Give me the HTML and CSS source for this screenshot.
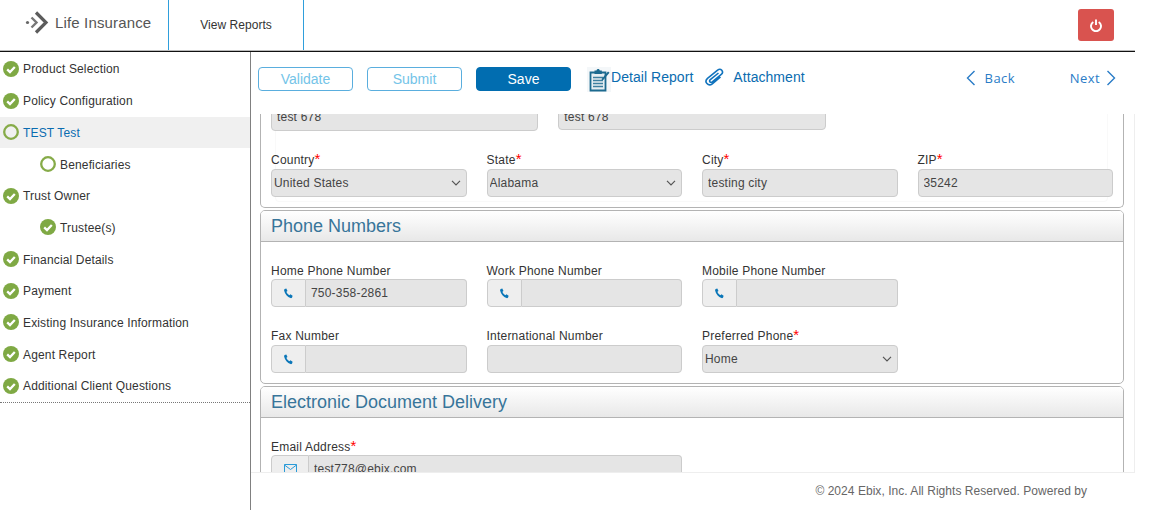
FILE: index.html
```html
<!DOCTYPE html>
<html lang="en">
<head>
<meta charset="utf-8">
<title>Life Insurance</title>
<link rel="stylesheet" href="styles.css">
</head>
<body>
<svg class="defs" width="0" height="0" aria-hidden="true">
  <symbol id="done" viewBox="0 0 16 16"><circle cx="8" cy="8" r="8" fill="#7fa944"/><path d="M4.200 8.300 7 11l4.800-5" fill="none" stroke="#fff" stroke-width="2.300"/></symbol>
  <symbol id="todo" viewBox="0 0 16 16"><circle cx="8" cy="8" r="6.800" fill="none" stroke="#86ab48" stroke-width="2.300"/></symbol>
  <symbol id="phone" viewBox="0 0 12 12"><path d="M1.800 1.100 3.600.6l1.300 2.600-1.200 1c.5 1.500 1.700 2.900 3.300 3.700l1.100-1.100 2.400 1.600-.6 1.900c-.3.600-1 .9-1.700.7C4.900 9.800 2 6.900 1.200 2.800c-.1-.7.100-1.400.6-1.700z" fill="#0a76b8"/></symbol>
</svg>
<div class="app">
  <header class="topbar">
    <div class="brand">
      <svg class="brand-mark" width="24" height="24" viewBox="0 0 24 24" aria-hidden="true">
        <circle cx="2.500" cy="11.500" r="1.600" fill="#666"/>
        <path d="M6.500 6.500 11.500 11.500 6.500 16.500" fill="none" stroke="#777" stroke-width="2.400"/>
        <path d="M11 1.500 21 11.500 11 21.500" fill="none" stroke="#5c5c5c" stroke-width="3.200"/>
      </svg>
      <span>Life Insurance</span>
    </div>
    <a class="top-link">View Reports</a>
    <button class="power" type="button" aria-label="Log out">
      <svg width="12" height="13" viewBox="0 0 12 13" aria-hidden="true"><path d="M3.300 3A5 5 0 1 0 8.700 3" fill="none" stroke="#fff" stroke-width="1.900"/><path d="M6 .5v5.500" fill="none" stroke="#fff" stroke-width="1.900"/></svg>
    </button>
  </header>
  <div class="shell">
    <nav class="sidebar">
      <a class="step"><svg class="mark"><use href="#done"/></svg>Product Selection</a>
      <a class="step"><svg class="mark"><use href="#done"/></svg>Policy Configuration</a>
      <a class="step active"><svg class="mark"><use href="#todo"/></svg>TEST Test</a>
      <a class="step sub"><svg class="mark"><use href="#todo"/></svg>Beneficiaries</a>
      <a class="step"><svg class="mark"><use href="#done"/></svg>Trust Owner</a>
      <a class="step sub"><svg class="mark"><use href="#done"/></svg>Trustee(s)</a>
      <a class="step"><svg class="mark"><use href="#done"/></svg>Financial Details</a>
      <a class="step"><svg class="mark"><use href="#done"/></svg>Payment</a>
      <a class="step"><svg class="mark"><use href="#done"/></svg>Existing Insurance Information</a>
      <a class="step"><svg class="mark"><use href="#done"/></svg>Agent Report</a>
      <a class="step"><svg class="mark"><use href="#done"/></svg>Additional Client Questions</a>
    </nav>
    <main class="main">
      <div class="toolbar">
        <button class="btn ghost" type="button">Validate</button>
        <button class="btn ghost" type="button">Submit</button>
        <button class="btn primary" type="button">Save</button>
        <a class="tool tool-report">
          <svg class="report-icon" width="24" height="25" viewBox="0 0 24 25" aria-hidden="true">
            <rect width="24" height="25" fill="#f4f7f9"/>
            <path d="M3.500 5.500h15v18h-15z" fill="#e6eef2" stroke="#1c6a8f" stroke-width="1.800"/>
            <path d="M7.500 7V3.500h2c.3-2 3-2 3.300 0h2V7z" fill="#1c6a8f"/>
            <path d="M6 10.500h10M6 13.500h10M6 16.500h10M6 19.500h10" stroke="#3d7f9f" stroke-width="1.500"/>
            <path d="M15 11.500 21 4.500l1.500 1.300-6 7-2 .8z" fill="#1c6a8f"/>
          </svg>
          <span>Detail Report</span>
        </a>
        <a class="tool tool-attach">
          <svg width="21" height="20" viewBox="0 0 21 20" aria-hidden="true"><path d="M14.500 6 6.300 12.700c-1.800 1.500.2 3.600 2 2.200l9-7.500c3-2.600-.5-6.800-3.700-4.300L3.500 11.300c-3.800 3.400.8 8.700 4.800 5.500l8.200-6.800" fill="none" stroke="#1173bd" stroke-width="1.600"/></svg>
          <span>Attachment</span>
        </a>
        <a class="pager pager-back">
          <svg width="10" height="16" viewBox="0 0 10 16" aria-hidden="true"><path d="M8.500 1 1.500 8l7 7" fill="none" stroke="#2a7cc7" stroke-width="1.400"/></svg>
          <span>Back</span>
        </a>
        <a class="pager pager-next">
          <span>Next</span>
          <svg width="10" height="16" viewBox="0 0 10 16" aria-hidden="true"><path d="M1.500 1l7 7-7 7" fill="none" stroke="#2a7cc7" stroke-width="1.400"/></svg>
        </a>
      </div>
      <div class="scroller">
        <section class="panel panel-address">
          <div class="grid grid-3">
            <div class="field"><input class="input" value="test 678"></div>
            <div class="field"><input class="input shift" value="test 678"></div>
          </div>
          <div class="grid grid-4">
            <div class="field"><label>Country<b>*</b></label><select class="input select"><option>United States</option></select></div>
            <div class="field"><label>State<b>*</b></label><select class="input select"><option>Alabama</option></select></div>
            <div class="field"><label>City<b>*</b></label><input class="input" value="testing city"></div>
            <div class="field"><label>ZIP<b>*</b></label><input class="input" value="35242"></div>
          </div>
        </section>
        <section class="panel">
          <h2 class="panel-title">Phone Numbers</h2>
          <div class="grid grid-4 panel-body">
            <div class="field"><label>Home Phone Number</label><div class="group"><span class="addon"><svg width="11" height="11"><use href="#phone"/></svg></span><input class="input" value="750-358-2861"></div></div>
            <div class="field"><label>Work Phone Number</label><div class="group"><span class="addon"><svg width="11" height="11"><use href="#phone"/></svg></span><input class="input"></div></div>
            <div class="field"><label>Mobile Phone Number</label><div class="group"><span class="addon"><svg width="11" height="11"><use href="#phone"/></svg></span><input class="input"></div></div>
            <div class="field"></div>
            <div class="field"><label>Fax Number</label><div class="group"><span class="addon"><svg width="11" height="11"><use href="#phone"/></svg></span><input class="input"></div></div>
            <div class="field"><label>International Number</label><input class="input"></div>
            <div class="field"><label>Preferred Phone<b>*</b></label><select class="input select"><option>Home</option></select></div>
          </div>
        </section>
        <section class="panel">
          <h2 class="panel-title">Electronic Document Delivery</h2>
          <div class="grid grid-4 panel-body">
            <div class="field field-wide"><label>Email Address<b>*</b></label><div class="group"><span class="addon addon-mail"><svg width="13" height="10" viewBox="0 0 13 10" aria-hidden="true"><path d="M.5.500h12v9H.5zM.5 1l6 4.500L12.500 1" fill="none" stroke="#2a9bd8"/></svg></span><input class="input" value="test778@ebix.com"></div></div>
          </div>
        </section>
      </div>
      <footer class="footer">© 2024 Ebix, Inc. All Rights Reserved. Powered by</footer>
    </main>
  </div>
</div>
</body>
</html>
```
FILE: styles.css
```css
* { box-sizing: border-box; }
html, body { margin: 0; height: 100%; background: #fff; overflow: hidden; }
body { font: 12px/17px "Liberation Sans", Arial, sans-serif; color: #333; }
.defs { position: absolute; }
.app { width: 1135px; height: 510px; display: flex; flex-direction: column; }

.topbar { height: 52px; flex: none; display: flex; align-items: stretch; border-bottom: 1px solid #111; box-shadow: inset 0 -1px 0 #bbb; }
.brand { width: 169px; height: 50px; display: flex; align-items: center; gap: 6px; padding: 0 0 5px 25px; border-right: 1px solid #2f9fdc; font-size: 15px; letter-spacing: .15px; color: #555; }
.brand-mark { flex: none; }
.top-link { width: 135px; height: 50px; display: flex; align-items: center; justify-content: center; border-right: 1px solid #2f9fdc; padding-top: 1px; color: #333; letter-spacing: .05px; }
.power { margin: 9px 21px 0 auto; width: 36px; height: 32px; border: 0; border-radius: 3px; background: #d9534f; display: flex; align-items: center; justify-content: center; padding: 0; }

.shell { flex: 1; min-height: 0; display: flex; }
.sidebar { width: 251px; flex: none; border-right: 1px solid #808080; padding-top: 1.13px; }
.sidebar::after { content: ""; display: block; width: 250px; height: 1px; border-top: 1px dotted #777; }
.step { height: 31.7px; display: flex; align-items: center; gap: 4px; padding: 2px 0 0 3px; color: #333; letter-spacing: .15px; }
.step.sub { padding-left: 40px; }
.step.active { background: #f0f0f0; color: #0a6cb0; }
.mark { width: 16px; height: 16px; flex: none; margin-top: -2px; }

.main { width: 884px; display: flex; flex-direction: column; min-height: 0; }
.toolbar { height: 62px; flex: none; display: flex; align-items: center; padding: 0 19px 8px 7px; gap: 14px; }
.btn { width: 95px; height: 24px; border-radius: 4px; font: 14px "Liberation Sans", Arial, sans-serif; padding: 0; }
.ghost { background: #fff; border: 1px solid #5aaede; color: #74c4e8; }
.primary { background: #016db0; border: 1px solid #016db0; color: #fff; }
.tool { display: flex; align-items: center; color: #0a6cb0; font-size: 14px; letter-spacing: .05px; }
.tool span { margin-bottom: 3px; }
.tool-report { margin-left: 2px; }
.tool-attach { gap: 8px; margin-left: -3px; margin-bottom: 4px; }
.tool-attach span { margin-bottom: 0; }
.pager { display: flex; align-items: center; gap: 9px; font: 13px "Open Sans", sans-serif; letter-spacing: .4px; color: #2a7cc7; margin-bottom: 2px; }
.pager-back { margin-left: auto; }
.pager-next { margin-left: 41px; gap: 6px; }

.scroller { flex: 1; min-height: 0; overflow: hidden; padding: 0 10px 0 9px; border-right: 1px solid #eee; }
.panel { border: 1px solid #b3b3b3; border-radius: 5px; background: #fff; margin-bottom: 2px; padding-bottom: 10px; }
.panel-address { margin-top: -11px; border-top: 0; position: relative; isolation: isolate; }
.panel-address::before { content: ""; position: absolute; z-index: -1; left: 14px; right: 15px; top: 0; bottom: 5px; border: 1px solid #f9f9f9; border-radius: 4px; }
.panel-title { height: 31px; margin: 0; padding: 0 10px; border-bottom: 1px solid #b3b3b3; border-radius: 4px 4px 0 0; background: linear-gradient(#fff, #e8e8e8); font: 18px/30px "Liberation Sans", Arial, sans-serif; color: #38759a; }
.panel-body { padding-top: 20px; }
.panel-body > :nth-child(-n+4) label { padding-top: 1px; }
.grid { display: grid; gap: 21px 20px; padding-left: 10px; padding-right: 10px; }
.grid-3 { grid-template-columns: repeat(3, 1fr); height: 49px; }
.grid-4 { grid-template-columns: repeat(4, 1fr); }
.field-wide { grid-column: span 2; }
.field label { display: block; height: 17px; line-height: 17px; color: #333; letter-spacing: .22px; }
.field label b { font-weight: 400; font-size: 15px; line-height: 0; color: #f00; letter-spacing: 0; }
.input { display: block; width: 100%; height: 28px; padding: 0 5px; border: 1px solid #ccc; border-radius: 4px; background: #e5e5e5; font: 12px "Liberation Sans", Arial, sans-serif; letter-spacing: .2px; color: #444; min-width: 0; }
.shift { height: 27px; }
.select {
  appearance: none; padding: 0 0 0 2px;
  background: #e5e5e5 url("data:image/svg+xml,%3Csvg xmlns='http://www.w3.org/2000/svg' width='10' height='6'%3E%3Cpath d='M1 .8 5 4.800 9 .8' fill='none' stroke='%23555' stroke-width='1.200'/%3E%3C/svg%3E") no-repeat right 5px center;
}
.group { display: flex; height: 28px; }
.addon { width: 35px; flex: none; display: flex; align-items: center; justify-content: center; background: #eee; border: 1px solid #ccc; border-radius: 4px 0 0 4px; }
.addon-mail { width: 38px; }
.group .input { border-left: 0; border-radius: 0 4px 4px 0; }

.footer { height: 38px; flex: none; border-top: 1px solid #eee; padding: 10px 48px 0 0; text-align: right; color: #666; background: #fff; letter-spacing: .04px; }
```
